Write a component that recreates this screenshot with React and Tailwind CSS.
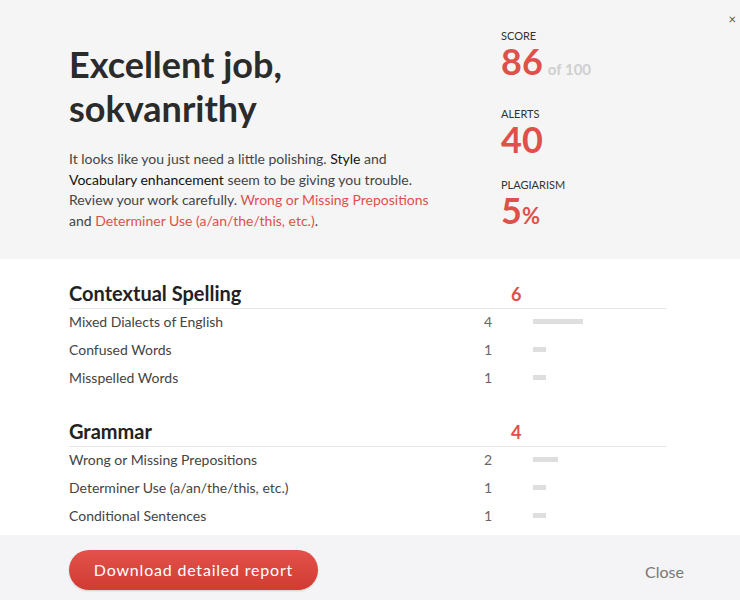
import React from 'react';

const sections = [
  {
    title: 'Contextual Spelling',
    count: 6,
    items: [
      { label: 'Mixed Dialects of English', count: 4 },
      { label: 'Confused Words', count: 1 },
      { label: 'Misspelled Words', count: 1 },
    ],
  },
  {
    title: 'Grammar',
    count: 4,
    items: [
      { label: 'Wrong or Missing Prepositions', count: 2 },
      { label: 'Determiner Use (a/an/the/this, etc.)', count: 1 },
      { label: 'Conditional Sentences', count: 1 },
    ],
  },
];

function Stat({ label, className = '', children }) {
  return (
    <div className={className}>
      <div className="text-[11px] leading-[14px] uppercase text-[#333]">{label}</div>
      <div className="mt-[1px] flex items-baseline text-[#e0504a] font-bold">{children}</div>
    </div>
  );
}

function Section({ section }) {
  return (
    <div>
      <div className="flex items-end border-b border-[#e6e6e6] pb-[2px]">
        <h2 className="w-[442px] text-[20px] leading-[26px] font-bold text-[#222]">{section.title}</h2>
        <span className="text-[18px] leading-[24px] font-bold text-[#e0504a]">{section.count}</span>
      </div>
      <div className="-mt-[2px]">
        {section.items.map((item) => (
          <div key={item.label} className="flex items-center h-[28px] text-[14px] text-[#444]">
            <span className="w-[415px]">{item.label}</span>
            <span className="w-[49px] text-[#666]">{item.count}</span>
            <span
              className="h-[5px] bg-[#dedede]"
              style={{ width: item.count === 4 ? 50 : item.count * 12.5 }}
            />
          </div>
        ))}
      </div>
    </div>
  );
}

export default function App() {
  return (
    <div className="relative w-[740px] h-[600px] flex flex-col bg-white overflow-hidden font-['Lato','Liberation_Sans',sans-serif]">
      <button className="absolute right-[4px] top-[13px] text-[13px] leading-none text-[#555]">×</button>

      {/* summary */}
      <div className="h-[259px] shrink-0 bg-[#f5f5f5] flex pl-[69px] pt-[42px]">
        <div className="w-[432px]">
          <h1 className="text-[36px] leading-[44px] font-bold text-[#2b2b2b]">
            Excellent job,
            <br />
            sokvanrithy
          </h1>
          <p className="mt-[19px] w-[370px] text-[14px] leading-[20.7px] text-[#444]">
            It looks like you just need a little polishing. <span className="text-[#111]">Style</span> and{' '}
            <span className="text-[#111]">Vocabulary enhancement</span> seem to be giving you trouble. Review your
            work carefully. <span className="text-[#e0504a]">Wrong or Missing Prepositions</span> and{' '}
            <span className="text-[#e0504a]">Determiner Use (a/an/the/this, etc.)</span>.
          </p>
        </div>
        <div className="flex flex-col -mt-[13px]">
          <Stat label="Score">
            <span className="text-[36px] leading-[34px]">86</span>
            <span className="ml-[5px] text-[15px] text-[#cfcfcf]">of 100</span>
          </Stat>
          <Stat label="Alerts" className="mt-[26px]">
            <span className="text-[36px] leading-[34px]">40</span>
          </Stat>
          <Stat label="Plagiarism" className="mt-[22px]">
            <span className="text-[36px] leading-[34px]">5</span>
            <span className="text-[22px]">%</span>
          </Stat>
        </div>
      </div>

      {/* breakdown */}
      <div className="flex-1 overflow-hidden pl-[69px] pt-[21px]">
        <div className="w-[597px] flex flex-col gap-[27px]">
          {sections.map((s) => (
            <Section key={s.title} section={s} />
          ))}
        </div>
      </div>

      {/* footer */}
      <div className="h-[65px] shrink-0 bg-[#f4f4f6] flex items-center justify-between pl-[69px] pr-[56px] pt-[5px]">
        <button className="h-[40px] w-[249px] rounded-full bg-gradient-to-b from-[#e2514a] to-[#d03b33] text-white text-[16px] tracking-[0.8px] shadow-[0_1px_2px_rgba(0,0,0,0.15)]">
          Download detailed report
        </button>
        <button className="mt-[4px] text-[16px] text-[#777]">Close</button>
      </div>
    </div>
  );
}
